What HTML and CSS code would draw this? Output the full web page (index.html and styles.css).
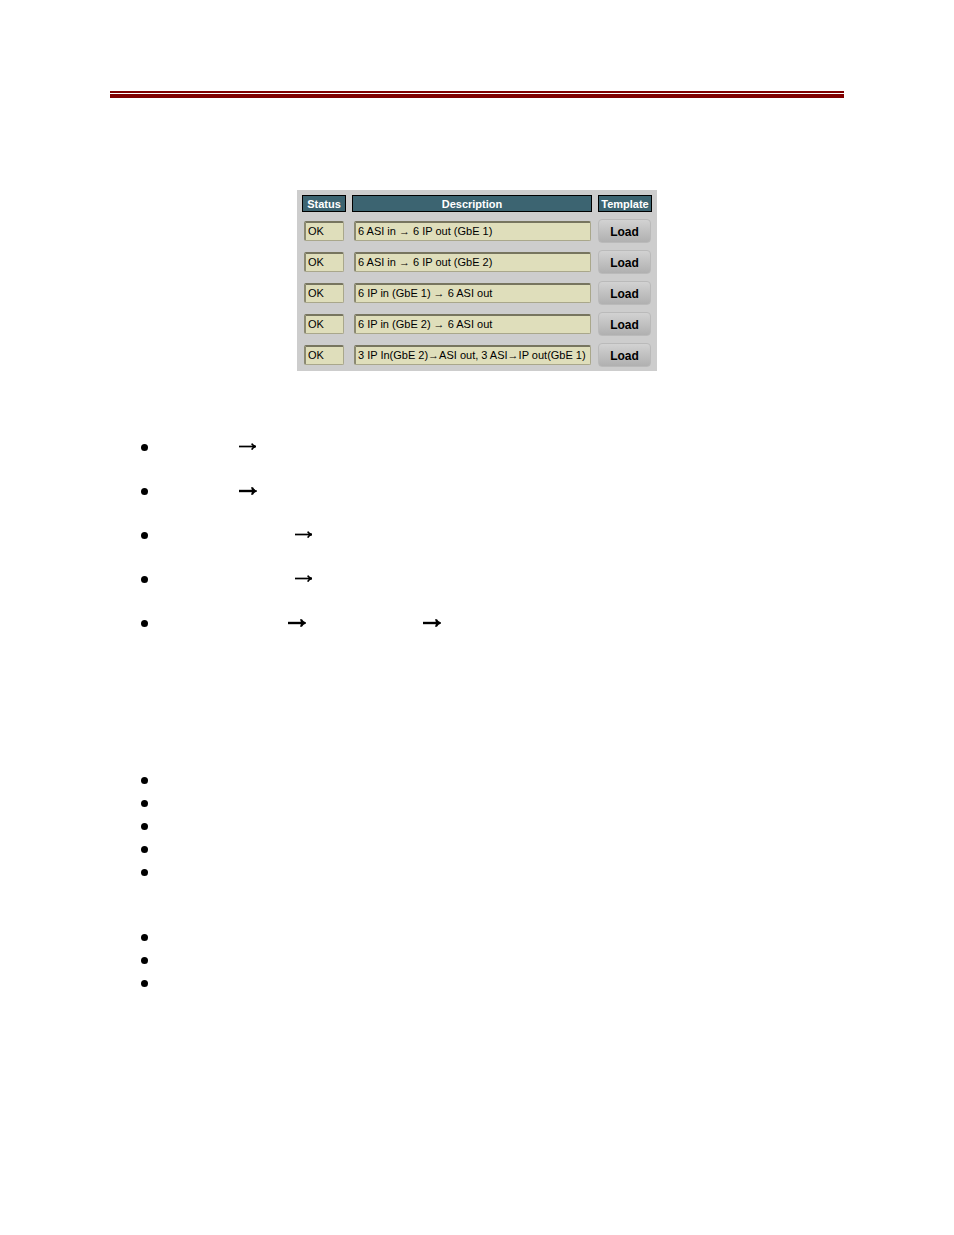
FILE: index.html
```
<!DOCTYPE html>
<html lang="en">
<head>
<meta charset="utf-8">
<title>Templates</title>
<link rel="stylesheet" href="styles.css">
</head>
<body>
<svg class="defs" aria-hidden="true">
<symbol id="arrow" viewBox="0 0 18 9"><path d="M0 3.5H17" fill="none" stroke="#000" stroke-width="1.7"/><path d="M12.7 .6Q13.8 2.8 16.8 3.5Q13.8 4.2 12.7 6.6" fill="none" stroke="#000" stroke-width="1.7"/></symbol>
<symbol id="arrow-bold" viewBox="0 0 18 9"><path d="M0 4H16" fill="none" stroke="#000" stroke-width="2.4"/><path d="M12 .3H14Q15 2.8 18 3.5V4.5Q15 5.2 14 7.8H12L13.2 4Z"/></symbol>
</svg>
<main class="page">
<hr class="rule">
<table class="panel">
<thead>
<tr><th>Status</th><th>Description</th><th>Template</th></tr>
</thead>
<tbody>
<tr><td><input class="field" readonly aria-label="Status 1" value="OK"></td><td><input class="field" readonly aria-label="Description 1" value="6 ASI in → 6 IP out (GbE 1)"></td><td><button class="load" type="button">Load</button></td></tr>
<tr><td><input class="field" readonly aria-label="Status 2" value="OK"></td><td><input class="field" readonly aria-label="Description 2" value="6 ASI in → 6 IP out (GbE 2)"></td><td><button class="load" type="button">Load</button></td></tr>
<tr><td><input class="field" readonly aria-label="Status 3" value="OK"></td><td><input class="field" readonly aria-label="Description 3" value="6 IP in (GbE 1) → 6 ASI out"></td><td><button class="load" type="button">Load</button></td></tr>
<tr><td><input class="field" readonly aria-label="Status 4" value="OK"></td><td><input class="field" readonly aria-label="Description 4" value="6 IP in (GbE 2) → 6 ASI out"></td><td><button class="load" type="button">Load</button></td></tr>
<tr><td><input class="field" readonly aria-label="Status 5" value="OK"></td><td><input class="field" readonly aria-label="Description 5" value="3 IP In(GbE 2)→ASI out, 3 ASI→IP out(GbE 1)"></td><td><button class="load" type="button">Load</button></td></tr>
</tbody>
</table>
<ul class="list routes">
<li class="short"><svg class="arrow"><use href="#arrow"/></svg></li>
<li class="short"><svg class="arrow"><use href="#arrow-bold"/></svg></li>
<li class="long"><svg class="arrow"><use href="#arrow"/></svg></li>
<li class="long"><svg class="arrow"><use href="#arrow"/></svg></li>
<li class="double"><svg class="arrow"><use href="#arrow-bold"/></svg><svg class="arrow"><use href="#arrow-bold"/></svg></li>
</ul>
<ul class="list steps"><li></li><li></li><li></li><li></li><li></li></ul>
<ul class="list notes"><li></li><li></li><li></li></ul>
</main>
</body>
</html>
```
FILE: styles.css
```
* { box-sizing: border-box; }
body {
  margin: 0;
  background: #fff;
  color: #000;
  font-family: "Liberation Sans", Arial, sans-serif;
}
.defs { position: absolute; width: 0; height: 0; }
.page { padding: 91px 110px 60px; }
.rule {
  height: 7px;
  margin: 0;
  border: solid #800000;
  border-width: 2px 0 4px;
}
.panel {
  display: grid;
  gap: 7px;
  width: 360px;
  margin: 92px auto 0;
  padding: 5px 5px 4px;
  background: #cdcdcd;
}
.panel thead, .panel tbody { display: grid; gap: 7px; }
.panel tr {
  display: grid;
  grid-template-columns: 44px 1fr 54px;
  column-gap: 6px;
}
.panel th {
  height: 17px;
  padding: 0;
  border: 1px solid #000;
  background: #3c6471;
  color: #fff;
  font-size: 11px;
  line-height: 17px;
}
.panel td { display: flex; align-items: center; height: 24px; padding: 0 1px 0 2px; }
.panel td:first-child { padding-right: 2px; }
.panel td:last-child { padding-left: 0; }
.field {
  width: 100%;
  height: 20px;
  padding: 0 0 1px 2px;
  border: solid;
  border-width: 2px 1px 1px 2px;
  border-color: #77755f #a9a78b #a9a78b #8b8971;
  border-radius: 2px;
  background: #dfdebb;
  color: #000;
  font: 11px "Liberation Sans", Arial, sans-serif;
}
.load {
  width: 100%;
  height: 24px;
  padding: 1px 0 0;
  border: 1px solid #bababa;
  border-radius: 4px;
  background: linear-gradient(#d2d2d2, #b0b0b0);
  color: #000;
  font: bold 12px "Liberation Sans", Arial, sans-serif;
}
.list { margin: 0; padding: 0 0 0 31px; list-style: none; }
.list li { display: flex; align-items: center; height: 23px; }
.list li::before {
  content: "";
  width: 7px;
  height: 7px;
  border-radius: 50%;
  background: #000;
}
.arrow { width: 18px; height: 9px; }
.routes { display: grid; gap: 21px; margin-top: 65px; }
.short .arrow { margin-left: 91px; }
.long .arrow { margin-left: 147px; }
.double .arrow { margin-left: 140px; }
.double .arrow + .arrow { margin-left: 117px; }
.steps { margin-top: 134px; }
.notes { margin-top: 42px; }
```
